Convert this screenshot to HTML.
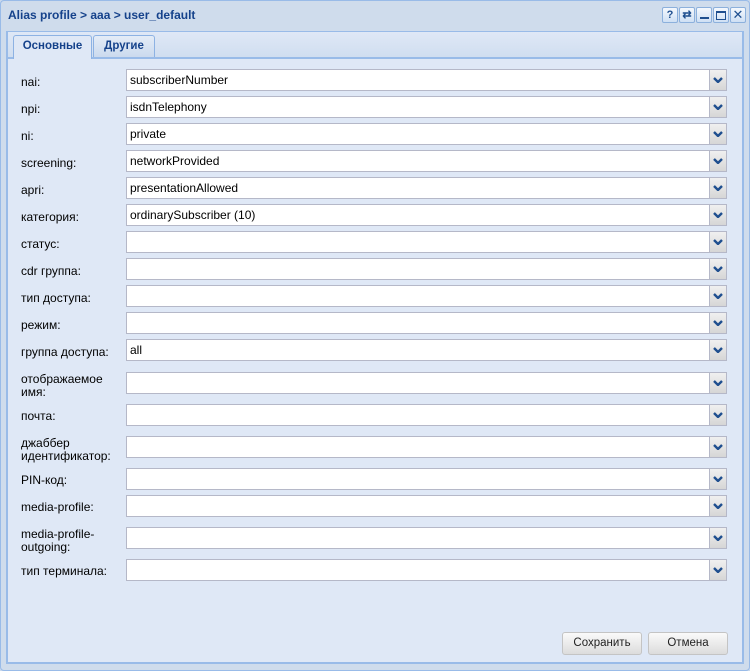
<html><head><style>
body{margin:0;width:750px;height:671px;background:#cad9ec;font-family:"Liberation Sans",Tahoma,sans-serif;font-size:12px;position:relative;overflow:hidden}
.win{position:absolute;left:0;top:0;width:748px;height:669px;border:1px solid #99bbe8;border-radius:4px;background:#cfdcec}
.title{position:absolute;left:7px;top:7px;font-weight:bold;color:#15428b;font-size:12px}
.tb{position:absolute;top:6px;width:14px;height:14px;border:1px solid #8cb0dc;border-radius:2px;background:linear-gradient(#f4f8fd,#cfe0f4);color:#1f4f8f;font-size:11px;font-weight:bold;text-align:center;line-height:14px}
.panel{position:absolute;left:6px;top:31px;width:734px;height:630px;border:2px solid #99bbe8;border-top:1px solid #99bbe8;background:#dfe8f6}
.strip{position:absolute;left:0;top:0;width:734px;height:25px;background:linear-gradient(#dfe8f6,#d0def0);border-bottom:2px solid #99bbe8}
.tab{position:absolute;top:3px;height:21px;border:1px solid #8db2e3;border-bottom:none;border-radius:3px 3px 0 0;font-weight:bold;color:#15428b;text-align:center;line-height:21px;font-size:11.5px}
.lbl{position:absolute;left:21px;color:#000;line-height:13px}
.fld{position:absolute;left:126px;width:599px;height:20px;border:1px solid #b5b8c8;background:#fff}
.fld span{position:absolute;left:3px;top:3px}
.dd{position:absolute;right:0;top:0;width:16px;height:20px;border-left:1px solid #b5b8c8;background:linear-gradient(#f0f0f0,#d6d6d6)}
.dd svg{position:absolute;left:3px;top:7px}
.btn{position:absolute;top:632px;height:21px;border:1px solid #c4c4c4;border-radius:3px;background:linear-gradient(#fafafa,#e8e8e8 60%,#dcdcdc);text-align:center;line-height:21px;color:#222;font-size:11.5px}
</style></head><body>
<div class="win">
<div class="title">Alias profile &gt; aaa &gt; user_default</div>
<div class="tb" style="left:661px">?</div>
<div class="tb" style="left:678px">⇄</div>
<div class="tb" style="left:695px"><div style="position:absolute;left:3px;top:9px;width:9px;height:2px;background:#1f4f8f"></div></div>
<div class="tb" style="left:712px"><div style="position:absolute;left:2px;top:3px;width:8px;height:6px;border:1.5px solid #1f4f8f;border-top-width:2px"></div></div>
<div class="tb" style="left:729px;font-weight:normal;font-size:13px">✕</div>
</div>
<div class="panel">
<div class="strip"></div>
<div class="tab" style="left:5px;width:77px;background:#dfe8f6;height:23px">Основные</div>
<div class="tab" style="left:85px;width:60px;background:linear-gradient(#e4ecf7,#cbdaee)">Другие</div>
</div>
<div class="lbl" style="top:76px">nai:</div><div class="fld" style="top:69px"><span>subscriberNumber</span><div class="dd"><svg width="10" height="6"><path d="M1 1L5 5L9 1" stroke="#1f4f8f" stroke-width="2.4" fill="none"/></svg></div></div>
<div class="lbl" style="top:103px">npi:</div><div class="fld" style="top:96px"><span>isdnTelephony</span><div class="dd"><svg width="10" height="6"><path d="M1 1L5 5L9 1" stroke="#1f4f8f" stroke-width="2.4" fill="none"/></svg></div></div>
<div class="lbl" style="top:130px">ni:</div><div class="fld" style="top:123px"><span>private</span><div class="dd"><svg width="10" height="6"><path d="M1 1L5 5L9 1" stroke="#1f4f8f" stroke-width="2.4" fill="none"/></svg></div></div>
<div class="lbl" style="top:157px">screening:</div><div class="fld" style="top:150px"><span>networkProvided</span><div class="dd"><svg width="10" height="6"><path d="M1 1L5 5L9 1" stroke="#1f4f8f" stroke-width="2.4" fill="none"/></svg></div></div>
<div class="lbl" style="top:184px">apri:</div><div class="fld" style="top:177px"><span>presentationAllowed</span><div class="dd"><svg width="10" height="6"><path d="M1 1L5 5L9 1" stroke="#1f4f8f" stroke-width="2.4" fill="none"/></svg></div></div>
<div class="lbl" style="top:211px">категория:</div><div class="fld" style="top:204px"><span>ordinarySubscriber (10)</span><div class="dd"><svg width="10" height="6"><path d="M1 1L5 5L9 1" stroke="#1f4f8f" stroke-width="2.4" fill="none"/></svg></div></div>
<div class="lbl" style="top:238px">статус:</div><div class="fld" style="top:231px"><div class="dd"><svg width="10" height="6"><path d="M1 1L5 5L9 1" stroke="#1f4f8f" stroke-width="2.4" fill="none"/></svg></div></div>
<div class="lbl" style="top:265px">cdr группа:</div><div class="fld" style="top:258px"><div class="dd"><svg width="10" height="6"><path d="M1 1L5 5L9 1" stroke="#1f4f8f" stroke-width="2.4" fill="none"/></svg></div></div>
<div class="lbl" style="top:292px">тип доступа:</div><div class="fld" style="top:285px"><div class="dd"><svg width="10" height="6"><path d="M1 1L5 5L9 1" stroke="#1f4f8f" stroke-width="2.4" fill="none"/></svg></div></div>
<div class="lbl" style="top:319px">режим:</div><div class="fld" style="top:312px"><div class="dd"><svg width="10" height="6"><path d="M1 1L5 5L9 1" stroke="#1f4f8f" stroke-width="2.4" fill="none"/></svg></div></div>
<div class="lbl" style="top:346px">группа доступа:</div><div class="fld" style="top:339px"><span>all</span><div class="dd"><svg width="10" height="6"><path d="M1 1L5 5L9 1" stroke="#1f4f8f" stroke-width="2.4" fill="none"/></svg></div></div>
<div class="lbl" style="top:373px">отображаемое<br>имя:</div><div class="fld" style="top:372px"><div class="dd"><svg width="10" height="6"><path d="M1 1L5 5L9 1" stroke="#1f4f8f" stroke-width="2.4" fill="none"/></svg></div></div>
<div class="lbl" style="top:410px">почта:</div><div class="fld" style="top:404px"><div class="dd"><svg width="10" height="6"><path d="M1 1L5 5L9 1" stroke="#1f4f8f" stroke-width="2.4" fill="none"/></svg></div></div>
<div class="lbl" style="top:437px">джаббер<br>идентификатор:</div><div class="fld" style="top:436px"><div class="dd"><svg width="10" height="6"><path d="M1 1L5 5L9 1" stroke="#1f4f8f" stroke-width="2.4" fill="none"/></svg></div></div>
<div class="lbl" style="top:474px">PIN-код:</div><div class="fld" style="top:468px"><div class="dd"><svg width="10" height="6"><path d="M1 1L5 5L9 1" stroke="#1f4f8f" stroke-width="2.4" fill="none"/></svg></div></div>
<div class="lbl" style="top:501px">media-profile:</div><div class="fld" style="top:495px"><div class="dd"><svg width="10" height="6"><path d="M1 1L5 5L9 1" stroke="#1f4f8f" stroke-width="2.4" fill="none"/></svg></div></div>
<div class="lbl" style="top:528px">media-profile-<br>outgoing:</div><div class="fld" style="top:527px"><div class="dd"><svg width="10" height="6"><path d="M1 1L5 5L9 1" stroke="#1f4f8f" stroke-width="2.4" fill="none"/></svg></div></div>
<div class="lbl" style="top:565px">тип терминала:</div><div class="fld" style="top:559px"><div class="dd"><svg width="10" height="6"><path d="M1 1L5 5L9 1" stroke="#1f4f8f" stroke-width="2.4" fill="none"/></svg></div></div>
<div class="btn" style="left:562px;width:78px">Сохранить</div>
<div class="btn" style="left:648px;width:78px">Отмена</div>
</body></html>
